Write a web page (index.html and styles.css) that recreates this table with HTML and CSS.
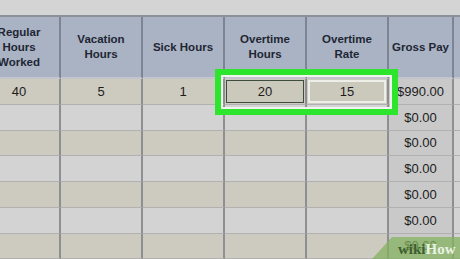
FILE: index.html
```html
<!DOCTYPE html>
<html>
<head>
<meta charset="utf-8">
<link rel="stylesheet" href="styles.css">
</head>
<body>
<div class="page">
  <div class="topband"></div>
  <div class="sheet">
    <div class="cell head">Regular<br>Hours<br>Worked</div>
    <div class="cell head">Vacation<br>Hours</div>
    <div class="cell head">Sick Hours</div>
    <div class="cell head">Overtime<br>Hours</div>
    <div class="cell head">Overtime<br>Rate</div>
    <div class="cell head">Gross Pay</div>
    <div class="cell head last"></div>

    <div class="cell tan">40</div>
    <div class="cell tan">5</div>
    <div class="cell tan">1</div>
    <div class="cell tan sel-dark"><span class="inner dark">20</span></div>
    <div class="cell tan sel-light"><span class="inner light">15</span></div>
    <div class="cell pay">$990.00</div>
    <div class="cell grey last"></div>

    <div class="cell grey"></div><div class="cell grey"></div><div class="cell grey"></div><div class="cell grey"></div><div class="cell grey"></div><div class="cell pay">$0.00</div><div class="cell grey last"></div>
    <div class="cell tan"></div><div class="cell tan"></div><div class="cell tan"></div><div class="cell tan"></div><div class="cell tan"></div><div class="cell pay">$0.00</div><div class="cell grey last"></div>
    <div class="cell grey"></div><div class="cell grey"></div><div class="cell grey"></div><div class="cell grey"></div><div class="cell grey"></div><div class="cell pay">$0.00</div><div class="cell grey last"></div>
    <div class="cell tan"></div><div class="cell tan"></div><div class="cell tan"></div><div class="cell tan"></div><div class="cell tan"></div><div class="cell pay">$0.00</div><div class="cell grey last"></div>
    <div class="cell grey"></div><div class="cell grey"></div><div class="cell grey"></div><div class="cell grey"></div><div class="cell grey"></div><div class="cell pay">$0.00</div><div class="cell grey last"></div>
    <div class="cell tan"></div><div class="cell tan"></div><div class="cell tan"></div><div class="cell tan"></div><div class="cell tan"></div><div class="cell pay">$0.00</div><div class="cell grey last"></div>
  </div>
  <div class="highlight"></div>
  <div class="watermark"><span class="wiki">wiki</span><span class="how">How</span></div>
</div>
</body>
</html>
```

FILE: styles.css
```css
html, body {
  margin: 0;
  padding: 0;
}
body {
  width: 460px;
  height: 259px;
  overflow: hidden;
  background: #d2d2d2;
  font-family: "Liberation Sans", Arial, sans-serif;
}
.page {
  position: relative;
  width: 460px;
  height: 259px;
  overflow: hidden;
}
.topband {
  height: 17px;
  background: #d4d4d4;
}
.sheet {
  display: grid;
  grid-template-columns: 82px 82px 82px 82px 82px 65px 40px;
  grid-template-rows: 62px repeat(7, 25.75px);
  margin-left: -21px;
  width: 515px;
  border-top: 2px solid #8c919b;
  margin-top: -2px;
}
.cell {
  display: flex;
  align-items: center;
  justify-content: center;
  text-align: center;
  box-sizing: border-box;
  border-right: 2px solid #8e8f92;
  border-bottom: 1px solid #b1b1b1;
  font-size: 13px;
  color: #1c1c1c;
}
.head {
  background: #a9b3c3;
  color: #1f2634;
  font-weight: bold;
  font-size: 11.5px;
  line-height: 15px;
  border-right: 2px solid #7e8592;
  border-bottom: 2px solid #c2c6cc;
}
.tan { background: #cdcbc0; }
.grey { background: #d3d3d3; }
.pay { background: #c9c9c9; }
.sel-dark, .sel-light {
  padding: 1px;
}
.inner {
  display: flex;
  align-items: center;
  justify-content: center;
  width: 100%;
  height: 100%;
  box-sizing: border-box;
  background: #cbc8bc;
}
.inner.dark {
  border: 1px solid #3f4c40;
}
.inner.light {
  border: 2px solid #eeeee8;
}
.highlight {
  position: absolute;
  left: 215px;
  top: 69px;
  width: 183px;
  height: 46px;
  box-sizing: border-box;
  border: 6px solid #2ee52e;
  box-shadow: inset 0 0 0 2px #f1f3ef;
}
.watermark {
  position: absolute;
  left: 372px;
  top: 237px;
  width: 88px;
  height: 22px;
  background: rgba(132, 178, 96, 0.75);
  clip-path: polygon(20px 0, 100% 0, 100% 100%, 0 100%);
  font-family: "Liberation Serif", "Times New Roman", serif;
  font-weight: bold;
  font-size: 15px;
  line-height: 24px;
  padding-left: 26px;
  box-sizing: border-box;
  white-space: nowrap;
}
.wiki { color: #3e5e2e; }
.how { color: #e9f2e2; }
```
